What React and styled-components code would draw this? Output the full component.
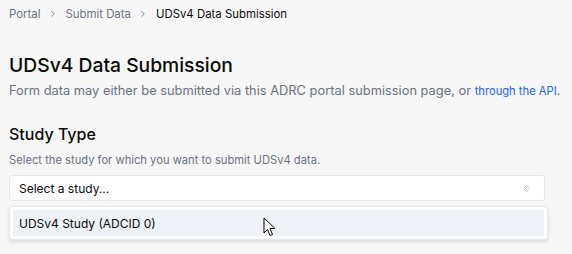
import React from 'react'
import styled, { createGlobalStyle } from 'styled-components'

const Global = createGlobalStyle`
  body {
    margin: 0;
    background: #f7f7f7;
    font-family: Inter, "Noto Sans", sans-serif;
    color: #0a0a0a;
  }
`

const Page = styled.div`
  padding: 6px 9px 0 9px;
  height: 248px;
  box-sizing: border-box;
`

const Crumbs = styled.nav`
  display: flex;
  align-items: center;
  gap: 7.5px;
  font-size: 11.4px;
  line-height: 16px;
  color: #6b7280;
`

const Crumb = styled.span`
  color: ${p => (p.$current ? '#0a0a0a' : '#6b7280')};
`

const Sep = styled.span`
  display: flex;
  color: #6b7280;
`

const Title = styled.h1`
  margin: 29px 0 0 0;
  font-size: 19.3px;
  line-height: 28px;
  font-weight: 500;
`

const Lead = styled.p`
  margin: 3px 0 0 0;
  font-size: 12.85px;
  line-height: 18px;
  color: #6b7280;
  white-space: nowrap;
`

const Link = styled.a`
  color: #2563eb;
  text-decoration: none;
  font-size: 11.2px;
`

const Section = styled.h2`
  margin: 23px 0 0 0;
  font-size: 16px;
  line-height: 22px;
  font-weight: 500;
`

const Hint = styled.p`
  margin: 7px 0 0 0;
  font-size: 11.2px;
  line-height: 16px;
  color: #6b7280;
`

const Field = styled.div`
  position: relative;
  margin-top: 7px;
  width: 536px;
`

const Trigger = styled.div`
  display: flex;
  align-items: center;
  justify-content: space-between;
  height: 26px;
  box-sizing: border-box;
  padding: 0 13px 0 9px;
  background: #fff;
  border: 1px solid #e5e7eb;
  border-radius: 3px;
  font-size: 12px;
  color: #0a0a0a;
`

const Menu = styled.div`
  position: absolute;
  left: 0;
  top: 31px;
  width: 539px;
  box-sizing: border-box;
  padding: 3px;
  background: #fff;
  border: 1px solid #e5e7eb;
  border-radius: 3px;
  box-shadow: 0 2px 4px rgba(0, 0, 0, 0.12);
`

const Option = styled.div`
  height: 26px;
  display: flex;
  align-items: center;
  padding: 0 6px;
  background: #eef2f7;
  font-size: 12px;
  color: #0a0a0a;
`

const Cursor = styled.svg`
  position: absolute;
  left: 254px;
  top: 42px;
`

const Chevron = () => (
  <svg width="10" height="10" viewBox="0 0 24 24" fill="none" stroke="currentColor" strokeWidth="2" strokeLinecap="round" strokeLinejoin="round">
    <path d="m9 18 6-6-6-6" />
  </svg>
)

const UpDown = () => (
  <svg width="9" height="11" viewBox="0 0 24 24" fill="none" stroke="#9ca3af" strokeWidth="2" strokeLinecap="round" strokeLinejoin="round">
    <path d="m7 15 5 5 5-5" />
    <path d="m7 9 5-5 5 5" />
  </svg>
)

export default function App() {
  return (
    <Page>
      <Global />
      <Crumbs>
        <Crumb>Portal</Crumb>
        <Sep><Chevron /></Sep>
        <Crumb>Submit Data</Crumb>
        <Sep><Chevron /></Sep>
        <Crumb $current>UDSv4 Data Submission</Crumb>
      </Crumbs>
      <Title>UDSv4 Data Submission</Title>
      <Lead>
        Form data may either be submitted via this ADRC portal submission page, or{' '}
        <Link href="#">through the API</Link>.
      </Lead>
      <Section>Study Type</Section>
      <Hint>Select the study for which you want to submit UDSv4 data.</Hint>
      <Field>
        <Trigger>
          <span>Select a study...</span>
          <UpDown />
        </Trigger>
        <Menu>
          <Option>UDSv4 Study (ADCID 0)</Option>
        </Menu>
        <Cursor width="13" height="20" viewBox="0 0 13 20">
          <path d="M1 1 L1 16 L4.5 12.5 L7 18.5 L9.5 17.5 L7 11.5 L12 11.5 Z" fill="#fff" stroke="#000" strokeWidth="1" strokeLinejoin="round" />
        </Cursor>
      </Field>
    </Page>
  )
}
